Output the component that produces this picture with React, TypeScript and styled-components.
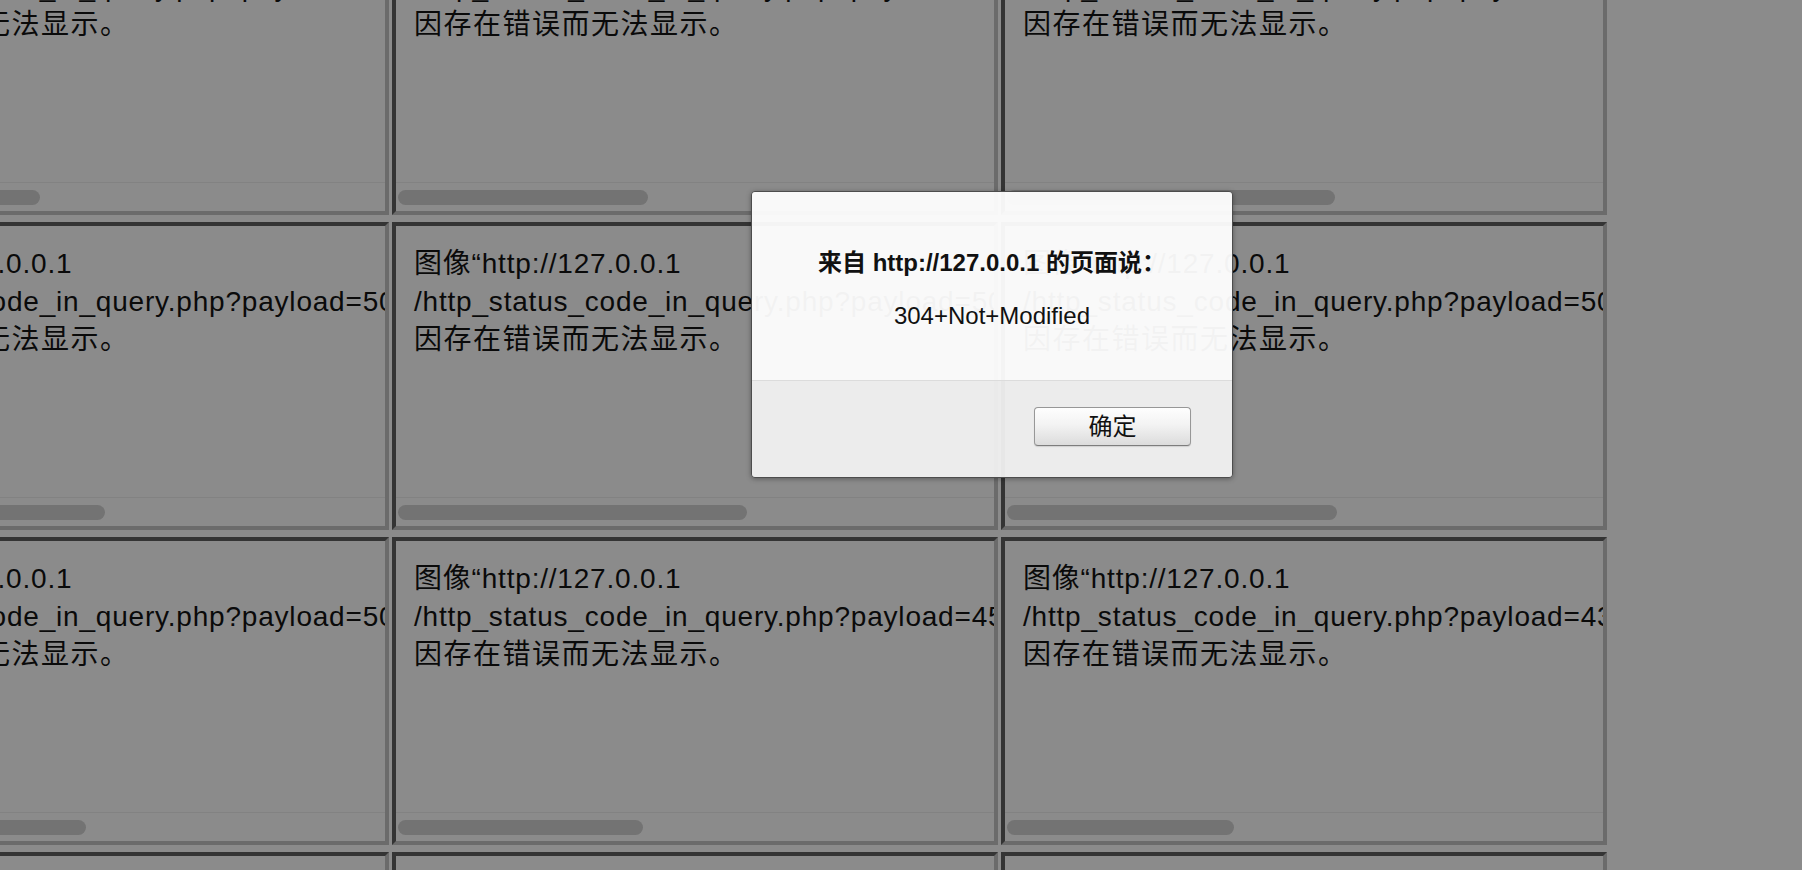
import React from 'react'
import styled, { createGlobalStyle } from 'styled-components'

const GlobalStyle = createGlobalStyle`
   html, body {
      margin: 0;
      padding: 0;
      overflow: hidden;
      background: #fff;
   }
   body {
      font-family: 'Liberation Sans', 'Noto Sans CJK SC', sans-serif;
   }
`

const Viewport = styled.div`
   position: relative;
   width: 1802px;
   height: 870px;
   overflow: hidden;
   background: #fff;
`

/* the page is scrolled, so the grid starts above and left of the window */
const Sheet = styled.div`
   display: grid;
   grid-template-columns: repeat(3, 606px);
   grid-auto-rows: 308px;
   column-gap: 3px;
   row-gap: 7px;
   margin: -93px 0 0 -217px;
`

const Frame = styled.div`
   box-sizing: border-box;
   display: flex;
   flex-direction: column;
   overflow: hidden;
   border: 4px solid;
   border-color: #606060 #c4c4c4 #c4c4c4 #606060;
   background: #fff;
`

const Doc = styled.div`
   flex: 1;
   min-height: 0;
   overflow: hidden;
   padding: 19px 0 0 18px;
   font-family: 'Liberation Sans', 'Noto Sans CJK SC', sans-serif;
   font-size: 28px;
   line-height: 38px;
   letter-spacing: 0.8px;
   color: #141414;
   white-space: nowrap;
`

const Line = styled.div<{ $cjk?: boolean }>`
   letter-spacing: ${(p) => (p.$cjk ? '1.5px' : 'inherit')};
`

const Track = styled.div`
   flex: none;
   box-sizing: border-box;
   height: 29px;
   border-top: 1px solid #efefef;
   padding: 7px 0 0 2px;
`

const Thumb = styled.div<{ $width: number }>`
   width: ${(p) => p.$width}px;
   height: 15px;
   border-radius: 8px;
   background: #d3d3d3;
`

const Shade = styled.div`
   position: absolute;
   inset: 0;
   box-sizing: border-box;
   padding: 191px 0 0 751px;
   background: rgba(0, 0, 0, 0.455);
`

const Dialog = styled.div`
   box-sizing: border-box;
   display: flex;
   flex-direction: column;
   width: 482px;
   height: 287px;
   overflow: hidden;
   border: 1px solid #4d4d4d;
   border-radius: 4px;
   box-shadow: 0 1px 5px rgba(0, 0, 0, 0.35);
   font-family: 'Liberation Sans', 'Noto Sans CJK SC', sans-serif;
   color: #111;
`

const DialogBody = styled.div`
   box-sizing: border-box;
   display: flex;
   flex-direction: column;
   align-items: center;
   gap: 25px;
   height: 189px;
   padding-top: 57px;
   border-bottom: 1px solid rgba(218, 218, 218, 0.95);
   background: rgba(255, 255, 255, 0.95);
`

const Title = styled.div`
   font-size: 24px;
   line-height: 28px;
   font-weight: bold;
`

const Message = styled.div`
   font-size: 24px;
   line-height: 28px;
`

const DialogFooter = styled.div`
   flex: 1;
   display: flex;
   justify-content: flex-end;
   align-items: flex-start;
   padding: 26px 41px 0 0;
   background: rgba(241, 241, 241, 0.95);
`

const Button = styled.button`
   box-sizing: border-box;
   width: 157px;
   height: 39px;
   padding: 0;
   border: 1px solid #979797;
   border-bottom-color: #7d7d7d;
   border-radius: 4px;
   background: linear-gradient(#fefefe, #f3f3f3 45%, #dcdcdc);
   box-shadow: 0 1px 1px rgba(0, 0, 0, 0.12);
   font-family: 'Liberation Sans', 'Noto Sans CJK SC', sans-serif;
   font-size: 24px;
   line-height: 36px;
   color: #111;
`

type Cell = { payload: string; thumb: number }

const rows: Cell[][] = [
   [
      { payload: '500+Internal+Server+Error', thumb: 251 },
      { payload: '501+Not+Implemented', thumb: 250 },
      { payload: '502+Bad+Gateway', thumb: 328 },
   ],
   [
      { payload: '503+Service+Unavailable', thumb: 316 },
      { payload: '504+Gateway+Timeout', thumb: 349 },
      { payload: '505+HTTP+Version+Not+Supported', thumb: 330 },
   ],
   [
      { payload: '506+Variant+Also+Negotiates', thumb: 297 },
      { payload: '451+Unavailable+For+Legal+Reasons', thumb: 245 },
      { payload: '431+Request+Header+Fields+Too+Large', thumb: 227 },
   ],
   [
      { payload: '429+Too+Many+Requests', thumb: 300 },
      { payload: '428+Precondition+Required', thumb: 280 },
      { payload: '426+Upgrade+Required', thumb: 310 },
   ],
]

const BrokenImageFrame = ({ payload, thumb }: Cell) => (
   <Frame>
      <Doc>
         <Line>图像“http://127.0.0.1</Line>
         <Line>/http_status_code_in_query.php?payload={payload}”</Line>
         <Line $cjk>因存在错误而无法显示。</Line>
      </Doc>
      <Track>
         <Thumb $width={thumb} />
      </Track>
   </Frame>
)

export default function App() {
   return (
      <>
         <GlobalStyle />
         <Viewport>
            <Sheet>
               {rows.flat().map((cell, i) => (
                  <BrokenImageFrame key={i} {...cell} />
               ))}
            </Sheet>
            <Shade>
               <Dialog role="alertdialog">
                  <DialogBody>
                     <Title>来自 http://127.0.0.1 的页面说：</Title>
                     <Message>304+Not+Modified</Message>
                  </DialogBody>
                  <DialogFooter>
                     <Button>确定</Button>
                  </DialogFooter>
               </Dialog>
            </Shade>
         </Viewport>
      </>
   )
}
